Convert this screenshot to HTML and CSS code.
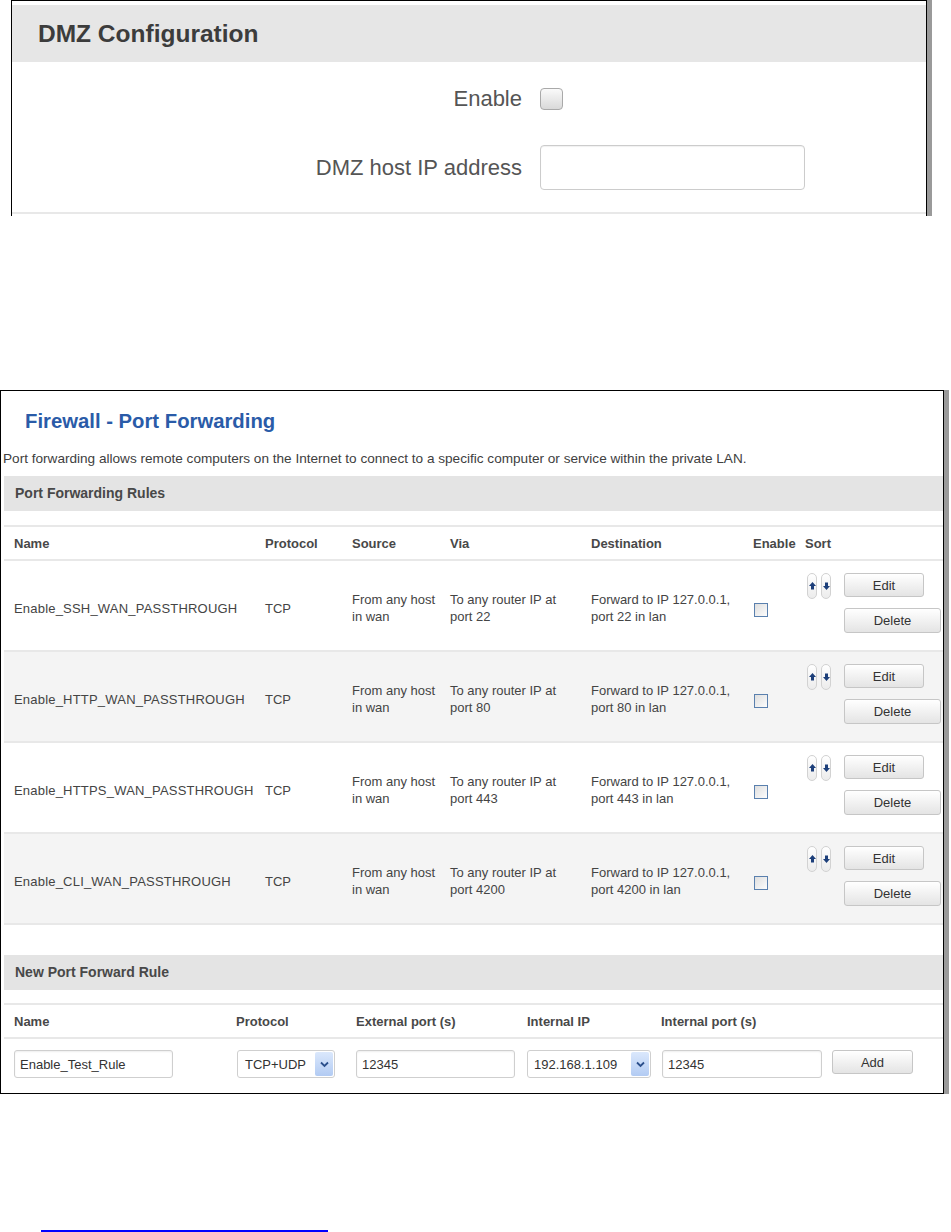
FILE: index.html
```html
<!DOCTYPE html>
<html>
<head>
  <title>DMZ and Port Forwarding</title>
  <link rel="stylesheet" href="styles.css">
</head>
<body>
  <div class="shot dmz">
    <div class="dmz-head">DMZ Configuration</div>
    <div class="dmz-body">
      <div class="dmz-row">
        <label class="dmz-label" for="dmz_on">Enable</label>
        <input class="dmz-check" type="checkbox" id="dmz_on">
      </div>
      <div class="dmz-row second">
        <label class="dmz-label" for="dmz_ip">DMZ host IP address</label>
        <input class="dmz-input" type="text" id="dmz_ip">
      </div>
    </div>
  </div>

  <div class="shot pf">
    <h2 class="pf-title">Firewall - Port Forwarding</h2>
    <p class="pf-desc">Port forwarding allows remote computers on the Internet to connect to a specific computer or service within the private LAN.</p>

    <div class="section-bar">Port Forwarding Rules</div>
    <table class="rules">
      <colgroup>
        <col style="width:261px">
        <col style="width:87px">
        <col style="width:98px">
        <col style="width:141px">
        <col style="width:162px">
        <col style="width:52px">
        <col style="width:39px">
        <col style="width:99px">
      </colgroup>
      <thead>
        <tr>
          <th>Name</th>
          <th>Protocol</th>
          <th>Source</th>
          <th>Via</th>
          <th>Destination</th>
          <th>Enable</th>
          <th>Sort</th>
          <th></th>
        </tr>
      </thead>
      <tbody>
        <tr>
          <td class="name">Enable_SSH_WAN_PASSTHROUGH</td>
          <td>TCP</td>
          <td>From any host in wan</td>
          <td>To any router IP at port 22</td>
          <td>Forward to IP 127.0.0.1, port 22 in lan</td>
          <td><input class="cb" type="checkbox"></td>
          <td class="sort">
            <span class="sort-btn"><svg width="7" height="8" viewBox="0 0 7 8"><path d="M3.5 0L7 4H5V7.5H2V4H0Z"/></svg></span><span class="sort-btn"><svg width="7" height="8" viewBox="0 0 7 8"><path d="M3.5 8L7 4H5V0.5H2V4H0Z"/></svg></span>
          </td>
          <td class="actions"><button class="btn btn-edit">Edit</button><button class="btn btn-delete">Delete</button></td>
        </tr>
        <tr>
          <td class="name">Enable_HTTP_WAN_PASSTHROUGH</td>
          <td>TCP</td>
          <td>From any host in wan</td>
          <td>To any router IP at port 80</td>
          <td>Forward to IP 127.0.0.1, port 80 in lan</td>
          <td><input class="cb" type="checkbox"></td>
          <td class="sort">
            <span class="sort-btn"><svg width="7" height="8" viewBox="0 0 7 8"><path d="M3.5 0L7 4H5V7.5H2V4H0Z"/></svg></span><span class="sort-btn"><svg width="7" height="8" viewBox="0 0 7 8"><path d="M3.5 8L7 4H5V0.5H2V4H0Z"/></svg></span>
          </td>
          <td class="actions"><button class="btn btn-edit">Edit</button><button class="btn btn-delete">Delete</button></td>
        </tr>
        <tr>
          <td class="name">Enable_HTTPS_WAN_PASSTHROUGH</td>
          <td>TCP</td>
          <td>From any host in wan</td>
          <td>To any router IP at port 443</td>
          <td>Forward to IP 127.0.0.1, port 443 in lan</td>
          <td><input class="cb" type="checkbox"></td>
          <td class="sort">
            <span class="sort-btn"><svg width="7" height="8" viewBox="0 0 7 8"><path d="M3.5 0L7 4H5V7.5H2V4H0Z"/></svg></span><span class="sort-btn"><svg width="7" height="8" viewBox="0 0 7 8"><path d="M3.5 8L7 4H5V0.5H2V4H0Z"/></svg></span>
          </td>
          <td class="actions"><button class="btn btn-edit">Edit</button><button class="btn btn-delete">Delete</button></td>
        </tr>
        <tr>
          <td class="name">Enable_CLI_WAN_PASSTHROUGH</td>
          <td>TCP</td>
          <td>From any host in wan</td>
          <td>To any router IP at port 4200</td>
          <td>Forward to IP 127.0.0.1, port 4200 in lan</td>
          <td><input class="cb" type="checkbox"></td>
          <td class="sort">
            <span class="sort-btn"><svg width="7" height="8" viewBox="0 0 7 8"><path d="M3.5 0L7 4H5V7.5H2V4H0Z"/></svg></span><span class="sort-btn"><svg width="7" height="8" viewBox="0 0 7 8"><path d="M3.5 8L7 4H5V0.5H2V4H0Z"/></svg></span>
          </td>
          <td class="actions"><button class="btn btn-edit">Edit</button><button class="btn btn-delete">Delete</button></td>
        </tr>
      </tbody>
    </table>

    <div class="section-bar new">New Port Forward Rule</div>
    <table class="new-rule">
      <colgroup>
        <col style="width:232px">
        <col style="width:120px">
        <col style="width:171px">
        <col style="width:134px">
        <col style="width:171px">
        <col style="width:111px">
      </colgroup>
      <thead>
        <tr>
          <th>Name</th>
          <th>Protocol</th>
          <th>External port (s)</th>
          <th>Internal IP</th>
          <th>Internal port (s)</th>
          <th></th>
        </tr>
      </thead>
      <tbody>
        <tr>
          <td class="name"><input class="txt w-name" type="text" value="Enable_Test_Rule"></td>
          <td>
            <div class="sel sel-proto"><span>TCP+UDP</span><span class="sel-arrow"><svg width="9" height="7" viewBox="0 0 9 7"><path d="M1 1.5L4.5 5L8 1.5" fill="none" stroke="#2b4f8c" stroke-width="1.8"/></svg></span></div>
          </td>
          <td><input class="txt w-port" type="text" value="12345"></td>
          <td>
            <div class="sel sel-ip"><span>192.168.1.109</span><span class="sel-arrow"><svg width="9" height="7" viewBox="0 0 9 7"><path d="M1 1.5L4.5 5L8 1.5" fill="none" stroke="#2b4f8c" stroke-width="1.8"/></svg></span></div>
          </td>
          <td><input class="txt w-iport" type="text" value="12345"></td>
          <td><button class="btn btn-add">Add</button></td>
        </tr>
      </tbody>
    </table>
  </div>

  <div class="link-line"></div>
</body>
</html>
```

FILE: styles.css
```css
body {
  margin: 0;
  font-family: "Liberation Sans", Arial, sans-serif;
  color: #404040;
  background-color: #fff;
}

.shot {
  border: 1px solid #000;
  box-shadow: 5px 0 0 #9a9a9a;
  background-color: #fff;
}

/* DMZ screenshot */

.dmz {
  width: 914px;
  margin-left: 11px;
  border-bottom: none;
  padding-top: 4px;
  padding-bottom: 2px;
}

.dmz-head {
  height: 57px;
  line-height: 57px;
  padding-left: 26px;
  background-color: #e6e6e6;
  font-size: 24.5px;
  font-weight: bold;
  color: #3c3c3c;
}

.dmz-body {
  padding: 26px 0 22px;
  border-bottom: 2px solid #e8e8e8;
}

.dmz-row {
  display: flex;
  align-items: center;
  height: 22px;
}

.dmz-row.second {
  height: 45px;
  margin-top: 35px;
}

.dmz-label {
  width: 510px;
  margin-right: 18px;
  text-align: right;
  font-size: 22px;
  color: #555;
}

.dmz-check {
  -webkit-appearance: none;
  appearance: none;
  width: 23px;
  height: 22px;
  margin: 0;
  border: 1px solid #a9a9a9;
  border-radius: 4px;
  background: linear-gradient(#fafafa, #d9d9d9);
}

.dmz-input {
  box-sizing: border-box;
  width: 265px;
  height: 45px;
  margin: 0;
  border: 1px solid #ccc;
  border-radius: 4px;
  box-shadow: inset 0 1px 1px rgba(0, 0, 0, 0.06);
}

/* port forwarding screenshot */

.pf {
  width: 942px;
  margin-top: 174px;
}

.pf-title {
  margin: 0;
  padding: 18px 0 0 24px;
  font-size: 20.3px;
  line-height: 24px;
  color: #2a5ba8;
}

.pf-desc {
  margin: 18px 0 0 2px;
  font-size: 13.6px;
  line-height: 16px;
  color: #404040;
}

.section-bar {
  margin: 9px 0 0 3px;
  height: 35px;
  line-height: 35px;
  padding-left: 11px;
  background-color: #e4e4e4;
  font-size: 14px;
  font-weight: bold;
  color: #484848;
}

.section-bar.new {
  margin-top: 30px;
}

.rules,
.new-rule {
  width: 939px;
  margin: 14px 0 0 3px;
  border-collapse: collapse;
  table-layout: fixed;
  font-size: 13px;
}

.new-rule {
  margin-top: 13px;
}

.rules th,
.new-rule th {
  height: 32px;
  padding: 0 10px 0 0;
  border-top: 2px solid #e8e8e8;
  border-bottom: 2px solid #e8e8e8;
  text-align: left;
  font-weight: bold;
  color: #484848;
  white-space: nowrap;
}

.rules th:first-child,
.new-rule th:first-child,
.rules td:first-child,
.new-rule td:first-child {
  padding-left: 10px;
}

.rules tbody tr {
  height: 91px;
  border-bottom: 2px solid #e8e8e8;
}

.rules tbody tr:nth-child(even) {
  background-color: #f4f4f4;
}

.rules td {
  padding: 5px 10px 0 0;
  line-height: 17px;
  vertical-align: middle;
  color: #444;
}

.rules td.name {
  white-space: nowrap;
  letter-spacing: 0.2px;
}

.cb {
  -webkit-appearance: none;
  appearance: none;
  display: block;
  width: 14px;
  height: 14px;
  margin: 4px 0 0 1px;
  border: 1px solid #5a80ae;
  background: linear-gradient(135deg, #dedede, #fdfdfd);
}

.rules td.sort {
  vertical-align: top;
  padding: 12px 0 0 2px;
  white-space: nowrap;
}

.sort-btn {
  display: inline-flex;
  justify-content: center;
  align-items: center;
  box-sizing: border-box;
  width: 10px;
  height: 26px;
  margin-right: 4px;
  border: 1px solid #d2d2d2;
  border-radius: 5px;
  background: linear-gradient(#fff, #ececec);
  vertical-align: top;
}

.sort-btn svg {
  fill: #1d3f7a;
}

.rules td.actions {
  padding: 0 0 5px 0;
}

.btn {
  display: block;
  box-sizing: border-box;
  height: 24px;
  margin: 0;
  padding: 0;
  border: 1px solid #c6c6c6;
  border-radius: 3px;
  background: linear-gradient(#fff, #e4e4e4);
  font-family: "Liberation Sans", Arial, sans-serif;
  font-size: 13px;
  color: #333;
}

.btn-edit {
  width: 80px;
}

.btn-delete {
  width: 97px;
  height: 25px;
  margin-top: 11px;
}

.btn-add {
  width: 81px;
}

.new-rule td {
  padding: 11px 0 15px 0;
  vertical-align: top;
}

.txt {
  box-sizing: border-box;
  display: block;
  height: 28px;
  margin: 0;
  padding: 0 5px;
  border: 1px solid #cfcfcf;
  border-radius: 3px;
  box-shadow: inset 0 1px 2px rgba(0, 0, 0, 0.07);
  font-family: "Liberation Sans", Arial, sans-serif;
  font-size: 13px;
  color: #333;
}

.w-name {
  width: 159px;
}

.w-port {
  width: 159px;
}

.w-iport {
  width: 160px;
  margin-left: 1px;
}

.sel {
  display: flex;
  align-items: center;
  box-sizing: border-box;
  height: 28px;
  border: 1px solid #cfcfcf;
  border-radius: 3px;
  color: #333;
}

.sel-proto {
  width: 98px;
  margin-left: 1px;
  padding-left: 7px;
}

.sel-ip {
  width: 124px;
  padding-left: 6px;
}

.sel-arrow {
  display: flex;
  justify-content: center;
  align-items: center;
  width: 18px;
  height: 24px;
  margin-left: auto;
  margin-right: 1px;
  border-radius: 2px;
  background: linear-gradient(#dbe8fc, #b2cbf3);
}

.link-line {
  width: 287px;
  height: 2px;
  margin: 136px 0 0 41px;
  background-color: #0000ff;
}
```
